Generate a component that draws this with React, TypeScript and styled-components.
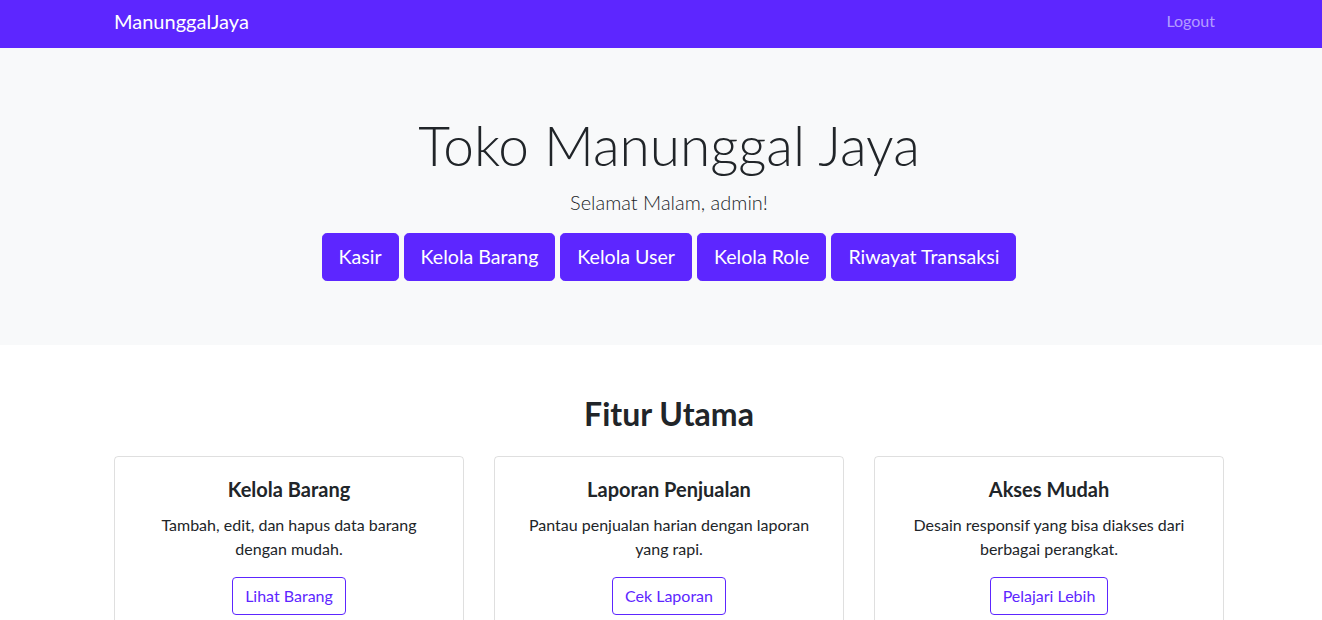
import React from 'react';
import styled, { createGlobalStyle } from 'styled-components';

const PURPLE = '#5d26ff';
const TEXT = '#212529';
const FONT = 'Lato, "Open Sans", "Liberation Sans", sans-serif';

const GlobalStyle = createGlobalStyle`
  html {
    overflow-x: hidden;
  }
  body {
    margin: 0;
    font-family: ${FONT};
    color: ${TEXT};
    background: #fff;
  }
  #root {
    width: 1338px;
  }
  * {
    box-sizing: border-box;
  }
`;

const Container = styled.div`
  width: 1110px;
  margin: 0 auto;
`;

const NavBar = styled.nav`
  background: ${PURPLE};
  height: 48px;
`;

const NavInner = styled(Container)`
  display: flex;
  justify-content: space-between;
  align-items: flex-start;
  padding-top: 6px;
`;

const Brand = styled.a`
  color: #fff;
  font-size: 20px;
  line-height: 30px;
  text-decoration: none;
`;

const NavLink = styled.a`
  color: rgba(255, 255, 255, 0.55);
  font-size: 16px;
  line-height: 30px;
  padding: 0 9px 0 8px;
  text-decoration: none;
`;

const Hero = styled.header`
  background: #f8f9fa;
  padding: 64px 0;
  text-align: center;
`;

const HeroTitle = styled.h1`
  margin: 0 0 8px;
  font-size: 55px;
  font-weight: 300;
  line-height: 67px;
`;

const Lead = styled.p`
  margin: 0 0 16px;
  font-size: 20px;
  font-weight: 300;
  line-height: 1.5;
`;

const ButtonRow = styled.div`
  display: flex;
  justify-content: center;
  gap: 5px;
`;

const BigButton = styled.a`
  display: inline-block;
  background: ${PURPLE};
  border: 1px solid ${PURPLE};
  color: #fff;
  font-size: 19.6px;
  line-height: 30px;
  padding: 8px 16px;
  border-radius: 4.8px;
  text-decoration: none;
`;

const Features = styled(Container)`
  padding-top: 50px;
  text-align: center;
`;

const SectionTitle = styled.h2`
  margin: 0 0 23px;
  font-size: 32px;
  font-weight: 700;
  line-height: 1.2;
`;

const CardGrid = styled.div`
  display: grid;
  grid-template-columns: repeat(3, 350px);
  gap: 30px;
`;

const Card = styled.div`
  border: 1px solid rgba(0, 0, 0, 0.125);
  border-radius: 4px;
  padding: 20px;
`;

const CardTitle = styled.h5`
  margin: 0 0 12px;
  font-size: 20px;
  font-weight: 700;
  line-height: 1.2;
`;

const CardText = styled.p`
  margin: 0 0 16px;
  font-size: 16px;
  line-height: 1.5;
`;

const OutlineButton = styled.a`
  display: inline-block;
  border: 1px solid ${PURPLE};
  border-radius: 4px;
  color: ${PURPLE};
  font-size: 16px;
  line-height: 24px;
  padding: 6px 12px;
  text-decoration: none;
`;

const menu = ['Kasir', 'Kelola Barang', 'Kelola User', 'Kelola Role', 'Riwayat Transaksi'];

const features = [
  { title: 'Kelola Barang', text: 'Tambah, edit, dan hapus data barang dengan mudah.', action: 'Lihat Barang' },
  { title: 'Laporan Penjualan', text: 'Pantau penjualan harian dengan laporan yang rapi.', action: 'Cek Laporan' },
  { title: 'Akses Mudah', text: 'Desain responsif yang bisa diakses dari berbagai perangkat.', action: 'Pelajari Lebih' },
];

export default function App() {
  return (
    <>
      <GlobalStyle />
      <NavBar>
        <NavInner>
          <Brand href="#">ManunggalJaya</Brand>
          <NavLink href="#">Logout</NavLink>
        </NavInner>
      </NavBar>
      <Hero>
        <HeroTitle>Toko Manunggal Jaya</HeroTitle>
        <Lead>Selamat Malam, admin!</Lead>
        <ButtonRow>
          {menu.map((m) => (
            <BigButton key={m} href="#">
              {m}
            </BigButton>
          ))}
        </ButtonRow>
      </Hero>
      <Features>
        <SectionTitle>Fitur Utama</SectionTitle>
        <CardGrid>
          {features.map((f) => (
            <Card key={f.title}>
              <CardTitle>{f.title}</CardTitle>
              <CardText>{f.text}</CardText>
              <OutlineButton href="#">{f.action}</OutlineButton>
            </Card>
          ))}
        </CardGrid>
      </Features>
    </>
  );
}
